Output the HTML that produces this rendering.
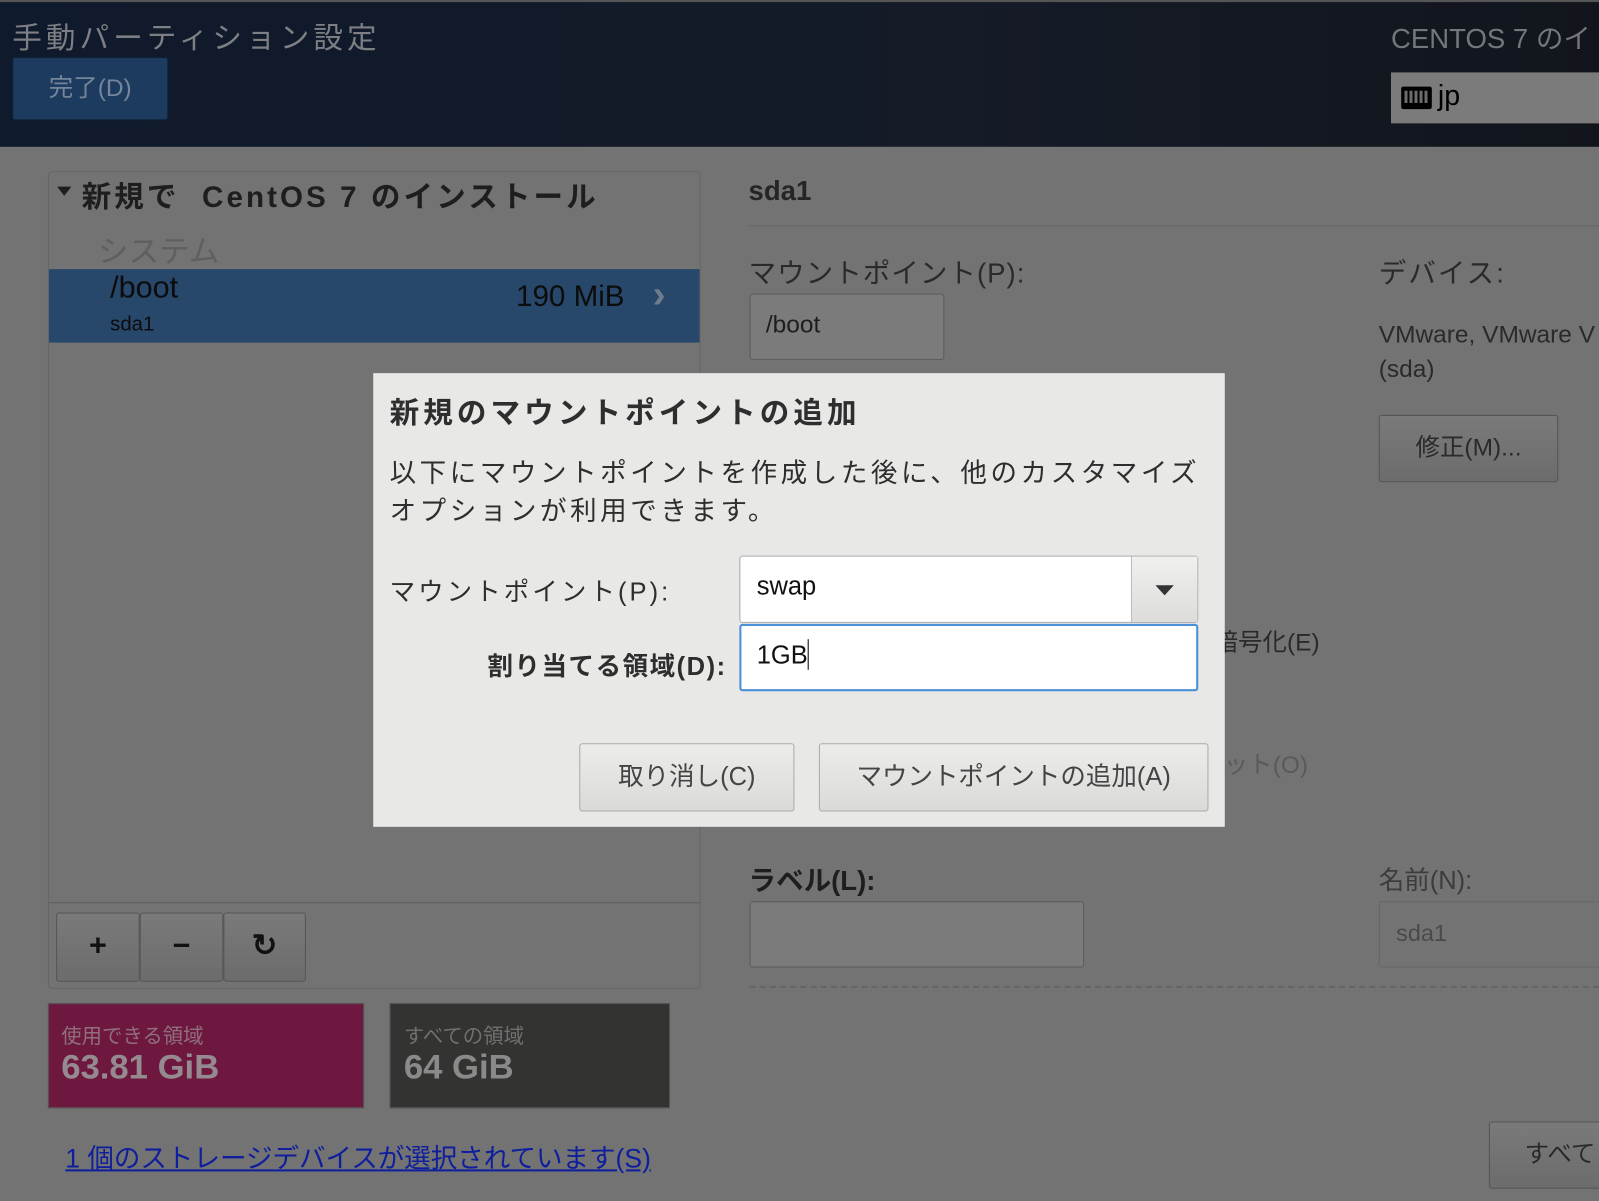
<!DOCTYPE html>
<html><head><meta charset="utf-8"><style>
*{box-sizing:border-box;margin:0;padding:0}
body{width:1599px;height:1201px;overflow:hidden;background:#737373;font-family:"Liberation Sans","Noto Sans CJK JP",sans-serif}
#w{position:absolute;left:0;top:0;width:1568px;height:1178px;transform:scale(1.0198,1.0195);transform-origin:0 0}
.a{position:absolute;white-space:nowrap}
.btn{position:absolute;border:1px solid #555;border-radius:3px;background:linear-gradient(#7a7a7a,#6c6c6c);color:#2a2a2a;text-align:center}
</style></head><body><div id="w">
<div class="a" style="left:0;top:0;width:1568px;height:144px;background:linear-gradient(90deg,#0f1a2c,#151b27 60%,#12151c);border-top:2px solid #555"></div>
<div class="a" style="left:12px;top:14px;font-size:29px;color:#7d7f84;letter-spacing:4px">手動パーティション設定</div>
<div class="a" style="left:12px;top:56px;width:153px;height:62px;background:#1d3b5e;border:1px solid #10233a;border-radius:3px;color:#75869a;font-size:24px;text-align:center;line-height:60px">完了(D)</div>
<div class="a" style="left:1364px;top:16px;font-size:27px;color:#73767b">CENTOS 7 のイ</div>
<div class="a" style="left:1364px;top:71px;width:204px;height:50px;background:#7b7b7b"></div>
<div class="a" style="left:1374px;top:85px;width:30px;height:22px;background:#000;border-radius:2px"><div style="margin:4px 3px;height:12px;background:repeating-linear-gradient(90deg,#888 0 3px,#000 3px 5px);opacity:.8"></div></div>
<div class="a" style="left:1410px;top:78px;font-size:28px;color:#000">jp</div>

<div class="a" style="left:47px;top:168px;width:640px;height:802px;border:1px solid #666;border-radius:4px"></div>
<div class="a" style="left:56px;top:183px;width:0;height:0;border-left:7px solid transparent;border-right:7px solid transparent;border-top:9px solid #1e1e1e"></div>
<div class="a" style="left:80px;top:170px;font-size:29px;font-weight:bold;color:#1e1e1e;letter-spacing:3px">新規で&nbsp; CentOS 7 のインストール</div>
<div class="a" style="left:96px;top:222px;font-size:30px;color:#5f5f5f">システム</div>
<div class="a" style="left:48px;top:264px;width:638px;height:72px;background:#27476b"></div>
<div class="a" style="left:108px;top:266px;font-size:30px;color:#0c0c0c">/boot</div>
<div class="a" style="left:108px;top:307px;font-size:20px;color:#0c0c0c">sda1</div>
<div class="a" style="left:506px;top:275px;font-size:29px;color:#0c0c0c">190 MiB</div>
<div class="a" style="left:640px;top:268px;font-size:38px;font-weight:bold;color:#6f7c8c">›</div>
<div class="a" style="left:48px;top:885px;width:638px;height:1px;background:#5e5e5e"></div>
<div class="btn" style="left:55px;top:895px;width:82px;height:68px;font-size:30px;line-height:64px;color:#111;font-weight:bold">+</div>
<div class="btn" style="left:137px;top:895px;width:82px;height:68px;font-size:30px;line-height:64px;color:#111;font-weight:bold">−</div>
<div class="btn" style="left:219px;top:895px;width:81px;height:68px;font-size:30px;line-height:64px;color:#111;font-weight:bold">↻</div>
<div class="a" style="left:47px;top:984px;width:310px;height:103px;background:#6e1840;border:1px solid #555"></div>
<div class="a" style="left:60px;top:1000px;font-size:20px;color:#8f6f7c">使用できる領域</div>
<div class="a" style="left:60px;top:1028px;font-size:34px;color:#958a8f;font-weight:bold">63.81 GiB</div>
<div class="a" style="left:382px;top:984px;width:275px;height:103px;background:#333331;border:1px solid #555"></div>
<div class="a" style="left:396px;top:1000px;font-size:20px;color:#707070">すべての領域</div>
<div class="a" style="left:396px;top:1028px;font-size:34px;color:#8a8a8a;font-weight:bold">64 GiB</div>
<div class="a" style="left:64px;top:1116px;font-size:26px;color:#0e1e9c;text-decoration:underline">1 個のストレージデバイスが選択されています(S)</div>

<div class="a" style="left:734px;top:172px;font-size:27px;color:#252525;font-weight:bold">sda1</div>
<div class="a" style="left:734px;top:221px;width:834px;height:1px;background:#666"></div>
<div class="a" style="left:734px;top:246px;font-size:27px;color:#2a2a2a;letter-spacing:1px">マウントポイント(P):</div>
<div class="a" style="left:735px;top:288px;width:191px;height:65px;background:#7b7b7b;border:1px solid #5b5b5b;border-radius:3px;font-size:24px;color:#1e1e1e;padding:16px 15px">/boot</div>
<div class="a" style="left:1352px;top:246px;font-size:27px;color:#2a2a2a;letter-spacing:2px">デバイス:</div>
<div class="a" style="left:1352px;top:312px;font-size:24px;color:#2a2a2a;line-height:34px">VMware, VMware V<br>(sda)</div>
<div class="btn" style="left:1352px;top:407px;width:176px;height:66px;font-size:24px;line-height:64px">修正(M)...</div>
<div class="a" style="left:1190px;top:610px;font-size:24px;color:#2a2a2a">暗号化(E)</div>
<div class="a" style="left:1200px;top:730px;font-size:24px;color:#5a5a5a">ット(O)</div>
<div class="a" style="left:734px;top:842px;font-size:27px;color:#1e1e1e;font-weight:bold">ラベル(L):</div>
<div class="a" style="left:735px;top:884px;width:328px;height:65px;background:#7b7b7b;border:1px solid #5b5b5b;border-radius:3px"></div>
<div class="a" style="left:1352px;top:844px;font-size:25px;color:#3c3c3c">名前(N):</div>
<div class="a" style="left:1352px;top:884px;width:230px;height:65px;border:1px solid #666;border-radius:3px;font-size:23px;color:#4a4a4a;padding:17px 16px">sda1</div>
<div class="a" style="left:735px;top:967px;width:833px;border-top:2px dashed #656565"></div>
<div class="btn" style="left:1460px;top:1100px;width:130px;height:66px;font-size:24px;line-height:64px;text-align:left;padding-left:34px">すべて</div>

<div class="a" style="left:366px;top:366px;width:835px;height:445px;background:#e8e8e6"></div>
<div class="a" style="left:382px;top:382px;font-size:29px;font-weight:bold;color:#2e2e2e;letter-spacing:4px">新規のマウントポイントの追加</div>
<div class="a" style="left:382px;top:446px;font-size:26px;color:#2e2e2e;line-height:37px;letter-spacing:3.5px">以下にマウントポイントを作成した後に、他のカスタマイズ<br>オプションが利用できます。</div>
<div class="a" style="left:382px;top:561px;font-size:25px;color:#2e2e2e;letter-spacing:3px">マウントポイント(P):</div>
<div class="a" style="left:478px;top:634px;font-size:25px;color:#2e2e2e;font-weight:bold;letter-spacing:1.5px">割り当てる領域(D):</div>
<div class="a" style="left:725px;top:545px;width:450px;height:66px;background:#fff;border:1px solid #aaa;border-radius:3px"></div>
<div class="a" style="left:1109px;top:546px;width:65px;height:64px;background:linear-gradient(#f0f0ef,#dcdcda);border-left:1px solid #bbb"></div>
<div class="a" style="left:1133px;top:574px;width:0;height:0;border-left:9px solid transparent;border-right:9px solid transparent;border-top:10px solid #333"></div>
<div class="a" style="left:742px;top:561px;font-size:25px;color:#111">swap</div>
<div class="a" style="left:725px;top:612px;width:450px;height:66px;background:#fff;border:2px solid #4a90d9;border-radius:3px"></div>
<div class="a" style="left:742px;top:627px;font-size:25px;color:#111">1GB<span style="display:inline-block;width:1px;height:30px;background:#000;vertical-align:-6px"></span></div>
<div class="a" style="left:568px;top:729px;width:211px;height:67px;border:1px solid #aaa;border-radius:3px;background:linear-gradient(#ececeb,#dadad8);font-size:25px;color:#444;text-align:center;line-height:65px">取り消し(C)</div>
<div class="a" style="left:803px;top:729px;width:382px;height:67px;border:1px solid #aaa;border-radius:3px;background:linear-gradient(#ececeb,#dadad8);font-size:25px;color:#444;text-align:center;line-height:65px">マウントポイントの追加(A)</div>
</div></body></html>
